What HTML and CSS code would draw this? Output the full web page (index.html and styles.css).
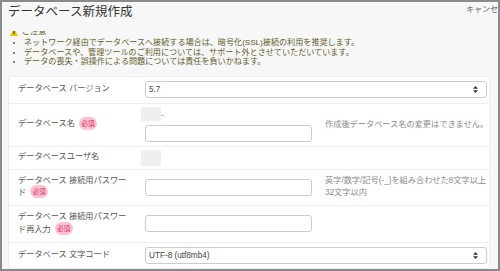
FILE: index.html
```html
<!DOCTYPE html>
<html lang="ja">
<head>
  <meta charset="UTF-8" />
  <meta name="viewport" content="width=device-width, initial-scale=1.0" />
  <title>データベース新規作成</title>
  <link rel="stylesheet" href="styles.css">
</head>
<body>
  <div class="frame">
    <div class="header">
      <h1 class="title">データベース新規作成</h1>
      <a class="cancel" href="#">キャンセル</a>
    </div>

    <div class="notice">
      <div class="notice-head">
        <svg class="warn" width="8" height="8" viewBox="0 0 8 8"><polygon points="4,0 8,8 0,8" fill="#e8c600"/><rect x="3.5" y="3" width="1" height="3" fill="#333"/></svg>
        <span>ご注意</span>
      </div>
      <ul class="notice-list">
        <li>ネットワーク経由でデータベースへ接続する場合は、暗号化(SSL)接続の利用を推奨します。</li>
        <li>データベースや、管理ツールのご利用については、サポート外とさせていただいています。</li>
        <li>データの喪失・誤操作による問題については責任を負いかねます。</li>
      </ul>
    </div>

    <div class="card">
      <div class="row row-26">
        <div class="label">データベース バージョン</div>
        <div class="select wide"><span>5.7</span>
          <svg width="5" height="7" viewBox="0 0 5 7"><polygon points="2.5,0 5,2.8 0,2.8" fill="#333"/><polygon points="0,4.2 5,4.2 2.5,7" fill="#333"/></svg>
        </div>
      </div>

      <div class="row row-43">
        <div class="label">データベース名<span class="badge">必須</span></div>
        <div class="field">
          <div class="prefix"><span class="stub"></span><span class="dash"></span></div>
          <div class="input"></div>
        </div>
        <div class="help">作成後データベース名の変更はできません。</div>
      </div>

      <div class="row row-23">
        <div class="label">データベースユーザ名</div>
        <div class="field">
          <span class="stub stub-tall"></span>
        </div>
      </div>

      <div class="row row-36">
        <div class="label">データベース 接続用パスワード<span class="badge">必須</span></div>
        <div class="input"></div>
        <div class="help">英字/数字/記号(-_)を組み合わせた8文字以上<br>32文字以内</div>
      </div>

      <div class="row row-37">
        <div class="label">データベース 接続用パスワード再入力<span class="badge">必須</span></div>
        <div class="input"></div>
      </div>

      <div class="row row-26">
        <div class="label">データベース 文字コード</div>
        <div class="select wide"><span>UTF-8 (utf8mb4)</span>
          <svg width="5" height="7" viewBox="0 0 5 7"><polygon points="2.5,0 5,2.8 0,2.8" fill="#333"/><polygon points="0,4.2 5,4.2 2.5,7" fill="#333"/></svg>
        </div>
      </div>
    </div>
  </div>
</body>
</html>
```

FILE: styles.css
```css
body {
  margin: 0;
  font-family: "Liberation Sans", "Noto Sans CJK JP", sans-serif;
  color: #444;
}
.frame {
  height: 271px;
  box-sizing: border-box;
  border: 2px solid #8a8a8a;
  background: #f7f7f7;
  padding: 0 8px 0 6px;
  overflow: hidden;
}
.header {
  display: flex;
  justify-content: space-between;
  align-items: flex-start;
  height: 22px;
}
.title {
  margin: 0;
  padding-top: 1px;
  font-size: 12.5px;
  line-height: 18px;
  font-weight: normal;
  color: #333;
}
.cancel {
  margin-top: 2px;
  margin-right: -16px;
  font-size: 8px;
  line-height: 12px;
  color: #666;
  text-decoration: none;
  white-space: nowrap;
}
.notice {
  font-size: 8.1px;
  color: #5f5b2c;
}
.notice-head {
  margin-top: 7px;
  height: 5px;
  overflow: hidden;
  display: flex;
  align-items: flex-end;
  gap: 4px;
  line-height: 9px;
}
.warn {
  flex: none;
  margin-left: 2px;
  margin-bottom: 0.5px;
}
.notice-list {
  margin: 2px 0 0;
  padding-left: 16px;
  line-height: 9.5px;
}
.card {
  margin-top: 9px;
  background: #fff;
  border-radius: 3px;
  border: 1px solid #eee;
  box-sizing: border-box;
}
.row {
  display: grid;
  grid-template-columns: 136px 167px 1fr;
  align-items: center;
  padding-right: 2px;
  box-sizing: border-box;
  border-top: 1px solid #eee;
  font-size: 8.2px;
}
.row:first-child {
  border-top: none;
}
.row-26 { min-height: 26px; }
.row-43 { min-height: 43px; }
.row-23 { min-height: 23px; }
.row-36 { min-height: 36px; }
.row-37 { min-height: 37px; }
.label {
  padding: 0 15px 0 9px;
  line-height: 12.5px;
  line-break: anywhere;
  color: #555;
}
.badge {
  display: inline-block;
  vertical-align: middle;
  margin: -2px 0 0 4px;
  width: 18px;
  height: 13px;
  line-height: 13px;
  border-radius: 7px;
  background: #fbc3d2;
  color: #e3245a;
  font-size: 6.5px;
  text-align: center;
}
.select {
  display: flex;
  justify-content: space-between;
  align-items: center;
  height: 17px;
  box-sizing: border-box;
  padding: 0 8px 0 3px;
  border: 1px solid #ccc;
  border-radius: 3px;
  background: #fff;
  color: #444;
}
.wide {
  grid-column: 2 / -1;
}
.field {
  display: flex;
  flex-direction: column;
  gap: 4px;
}
.prefix {
  display: flex;
  align-items: center;
  margin-left: -2px;
}
.stub {
  display: block;
  width: 20px;
  height: 14px;
  background: #efefef;
  margin-left: -2px;
}
.stub-tall {
  height: 16px;
  margin-left: -4px;
}
.dash {
  width: 3px;
  height: 1px;
  margin-top: 2px;
  background: #bbb;
}
.input {
  height: 17px;
  box-sizing: border-box;
  border: 1px solid #ccc;
  border-radius: 3px;
  background: #fff;
}
.help {
  padding-left: 13px;
  line-height: 12px;
  white-space: nowrap;
  color: #8a8a8a;
}
```
